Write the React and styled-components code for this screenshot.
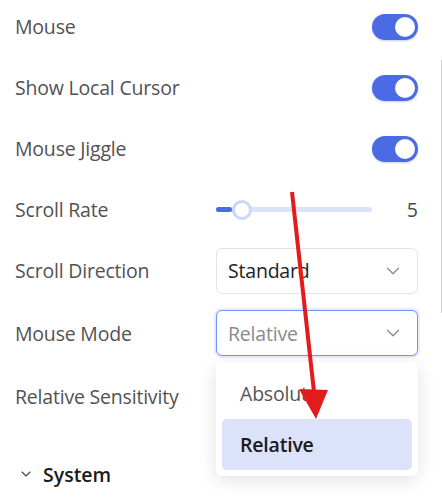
import React from "react";
import styled, { createGlobalStyle } from "styled-components";
import { ChevronDown } from "lucide-react";

const GlobalStyle = createGlobalStyle`
  html, body {
    margin: 0;
    padding: 0;
    background: #ffffff;
    overflow: hidden;
  }
  body {
    font-family: "Open Sans", "Noto Sans", sans-serif;
  }
`;

const Page = styled.div`
  position: relative;
  width: 442px;
  height: 500px;
  overflow: hidden;
  background: #fff;
`;

const List = styled.div`
  display: flex;
  flex-direction: column;
  padding: 0 24px 0 15px;
  margin-top: -4px;
`;

const Row = styled.div`
  position: relative;
  display: flex;
  align-items: center;
  justify-content: space-between;
  height: ${(p) => p.$h || 61}px;
`;

const Label = styled.span`
  font-size: 19.5px;
  color: #525252;
  letter-spacing: -0.2px;
`;

const Control = styled.div`
  position: relative;
  width: 202px;
  display: flex;
  align-items: center;
  justify-content: flex-end;
`;

const Toggle = styled.div`
  width: 46px;
  height: 26px;
  border-radius: 13px;
  background: #4a6be3;
  display: flex;
  align-items: center;
  justify-content: flex-end;
  padding: 0 3px;
  box-sizing: border-box;
  box-shadow: 0 1px 2px rgba(74, 107, 227, 0.3);
`;

const Knob = styled.div`
  width: 20px;
  height: 20px;
  border-radius: 50%;
  background: #fff;
`;

const SliderWrap = styled.div`
  display: flex;
  align-items: center;
  width: 100%;
`;

const Track = styled.div`
  position: relative;
  width: 156px;
  height: 5px;
  border-radius: 3px;
  background: #dbe3fb;
`;

const Fill = styled.div`
  height: 100%;
  border-radius: 3px;
  background: #4a6be3;
`;

const Thumb = styled.div`
  position: absolute;
  top: 50%;
  width: 20px;
  height: 20px;
  border-radius: 50%;
  background: #fff;
  border: 3px solid #c9d7fb;
  box-sizing: border-box;
  transform: translate(-50%, -50%);
`;

const Value = styled.span`
  margin-left: auto;
  font-size: 19.5px;
  color: #484848;
`;

const Select = styled.div`
  width: 100%;
  height: 46px;
  box-sizing: border-box;
  border-radius: 6px;
  border: 1px solid ${(p) => (p.$focus ? "#7492f2" : "#e3e3e3")};
  box-shadow: ${(p) => (p.$focus ? "0 0 0 2px rgba(116, 146, 242, 0.18)" : "none")};
  display: flex;
  align-items: center;
  justify-content: space-between;
  padding: 0 13px 0 11px;
  background: #fff;
`;

const SelectText = styled.span`
  font-size: 19.5px;
  letter-spacing: -0.2px;
  color: ${(p) => (p.$muted ? "#8a8a8a" : "#222")};
`;

const Menu = styled.div`
  position: absolute;
  top: calc(100% + 6px);
  left: 0;
  right: 0;
  z-index: 5;
  background: #fff;
  border-radius: 6px;
  box-shadow: 0 4px 18px rgba(0, 0, 0, 0.12);
  padding: 6px;
  display: flex;
  flex-direction: column;
`;

const Option = styled.div`
  height: 51px;
  display: flex;
  align-items: center;
  padding-left: 18px;
  border-radius: 5px;
  font-size: 19.5px;
  letter-spacing: -0.2px;
  background: ${(p) => (p.$active ? "#dbe2fa" : "transparent")};
  color: ${(p) => (p.$active ? "#1a1a1a" : "#555")};
  font-weight: ${(p) => (p.$active ? 600 : 400)};
`;

const Section = styled.div`
  display: flex;
  align-items: center;
  gap: 9px;
  padding-left: 3px;
  height: 50px;
  margin-top: 21px;
  font-size: 19.5px;
  font-weight: 600;
  color: #1a1a1a;
`;

const ScrollLine = styled.div`
  position: absolute;
  right: 0;
  top: 60px;
  width: 1px;
  height: 253px;
  background: #cfcfcf;
`;

const Arrow = styled.svg`
  position: absolute;
  left: 0;
  top: 0;
  pointer-events: none;
  z-index: 10;
`;

function Switch() {
  return (
    <Toggle>
      <Knob />
    </Toggle>
  );
}

export default function App() {
  const rate = 5;
  const pct = ((rate - 1) / 39) * 100;
  return (
    <Page>
      <GlobalStyle />
      <List>
        <Row>
          <Label>Mouse</Label>
          <Control>
            <Switch />
          </Control>
        </Row>
        <Row>
          <Label>Show Local Cursor</Label>
          <Control>
            <Switch />
          </Control>
        </Row>
        <Row>
          <Label>Mouse Jiggle</Label>
          <Control>
            <Switch />
          </Control>
        </Row>
        <Row>
          <Label>Scroll Rate</Label>
          <Control>
            <SliderWrap>
              <Track>
                <Fill style={{ width: `${pct}%` }} />
                <Thumb style={{ left: "26px" }} />
              </Track>
              <Value>{rate}</Value>
            </SliderWrap>
          </Control>
        </Row>
        <Row>
          <Label>Scroll Direction</Label>
          <Control>
            <Select>
              <SelectText>Standard</SelectText>
              <ChevronDown size={22} color="#888" strokeWidth={1.3} />
            </Select>
          </Control>
        </Row>
        <Row $h={64}>
          <Label>Mouse Mode</Label>
          <Control>
            <Select $focus>
              <SelectText $muted>Relative</SelectText>
              <ChevronDown size={22} color="#888" strokeWidth={1.3} />
            </Select>
            <Menu>
              <Option>Absolute</Option>
              <Option $active>Relative</Option>
            </Menu>
          </Control>
        </Row>
        <Row $h={63}>
          <Label>Relative Sensitivity</Label>
        </Row>
        <Section>
          <ChevronDown size={16} color="#444" strokeWidth={1.6} />
          System
        </Section>
      </List>
      <ScrollLine />
      <Arrow width="442" height="500" viewBox="0 0 442 500">
        <line x1="292" y1="192" x2="314" y2="392" stroke="#e31b1b" strokeWidth="4" />
        <polygon points="299,389 328,390 316,419" fill="#e31b1b" />
      </Arrow>
    </Page>
  );
}
